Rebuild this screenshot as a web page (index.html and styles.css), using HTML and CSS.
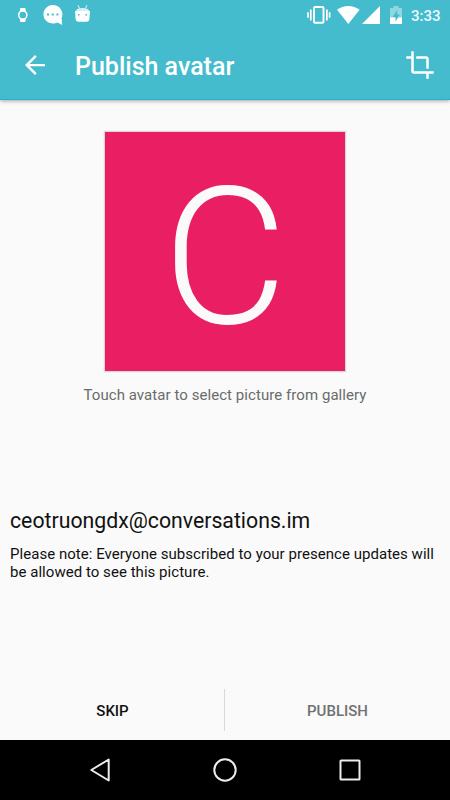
FILE: index.html
```html
<!DOCTYPE html>
<html lang="en">
  <head>
    <meta charset="UTF-8" />
    <meta name="viewport" content="width=device-width, initial-scale=1.0" />
    <title>Publish avatar</title>
    <link rel="stylesheet" href="styles.css" />
  </head>
  <body>
    <div class="screen">
      <header class="header">
        <div class="status_bar">
          <div class="notifications">
            <!-- watch -->
            <svg class="icon_watch" width="10" height="16" viewBox="0 0 10 16">
              <path d="M2.300 1h5l.6 4h-6.200zM2.300 15h5l.6-4h-6.200z" fill="#fff" />
              <circle cx="4.800" cy="8" r="4.100" fill="#45bccd" stroke="#fff" stroke-width="1.500" />
            </svg>
            <!-- chat -->
            <svg class="icon_chat" width="20" height="20" viewBox="0 0 20 20">
              <path d="M9.700 0a9.700 9.300 0 1 0 4.800 17.600L19.200 20 18.600 13A9.700 9.300 0 0 0 9.700 0z" fill="#fff" />
              <path d="M4 8.500h2v2H4zM8.700 8.500h2v2h-2zM13.400 8.500h2v2h-2z" fill="#45bccd" />
            </svg>
            <!-- android -->
            <svg class="icon_droid" width="15" height="17" viewBox="0 0 15 17">
              <path d="M3 .3L4.600 3.500M12 .3L10.400 3.500" stroke="#fff" stroke-width=".9" />
              <path d="M.8 6C1.200 4 3.500 3 7.500 3S13.800 4 14.200 6z" fill="#d3f0f4" />
              <path d="M0 6h15l-.6 8q-.3 2.800-3 2.800H3.600q-2.700 0-3-2.800z" fill="#fff" />
              <path d="M3 9h1.500v1.500H3zM10.500 9H12v1.500h-1.500z" fill="#45bccd" />
            </svg>
          </div>
          <div class="system_icons">
            <!-- vibrate -->
            <svg class="icon_vibrate" width="24" height="18" viewBox="0 0 24 18">
              <rect x="7" y="1" width="9.500" height="15.800" rx="1" fill="none" stroke="#fff" stroke-width="1.900" />
              <path d="M3.800 3.500v11M19.900 3.500v11M1 6.200v5.600M22.600 6.200v5.600" stroke="#fff" stroke-width="1.700" fill="none" />
            </svg>
            <!-- wifi -->
            <svg class="icon_wifi" width="23" height="18" viewBox="0 0 23 18">
              <path d="M0 3.800Q5 0 11.300 0t11.300 3.800L11.300 18z" fill="#fff" />
            </svg>
            <!-- signal -->
            <svg class="icon_signal" width="18" height="18" viewBox="0 0 18 18">
              <path d="M0 18L18 0v18z" fill="#fff" />
            </svg>
            <!-- battery -->
            <svg class="icon_battery" width="12" height="18" viewBox="0 0 12 18">
              <path d="M3.500 0h5v2H12v10H0V2h3.500z" fill="#8fd7e1" />
              <path d="M0 11.500h12V18H0z" fill="#fff" />
              <path d="M7.200 4L2.500 11h3v4.500L9.800 8.500H7z" fill="#45bccd" />
            </svg>
            <span class="clock">3:33</span>
          </div>
        </div>
        <div class="toolbar">
          <svg class="icon_back" width="30" height="30" viewBox="0 0 24 24" fill="#fff">
            <path d="M20 11.100H7.700l5.700-5.700L12 4l-8 8 8 8 1.400-1.400L7.700 12.900H20z" />
          </svg>
          <h1 class="title">Publish avatar</h1>
          <svg class="icon_crop" width="30" height="30" viewBox="0 0 24 24" fill="#fff">
            <path d="M17 15h2V7c0-1.100-.9-2-2-2H9v2h8v8zM7 17V1H5v4H1v2h4v10c0 1.100.9 2 2 2h10v4h2v-4h4v-2H7z" />
          </svg>
        </div>
      </header>

      <main class="content">
        <div class="avatar"><span class="avatar_letter">C</span></div>
        <p class="hint">Touch avatar to select picture from gallery</p>
        <div class="account">
          <p class="account_name">ceotruongdx@conversations.im</p>
          <p class="note">
            Please note: Everyone subscribed to your presence updates will<br />
            be allowed to see this picture.
          </p>
        </div>
      </main>

      <div class="btn_group">
        <button class="btn skip">SKIP</button>
        <button class="btn publish" disabled>PUBLISH</button>
      </div>

      <nav class="nav_bar">
        <svg width="24" height="26" viewBox="0 0 24 26">
          <path d="M20.700 2.500v21L3.300 13z" fill="none" stroke="#ececec" stroke-width="2" stroke-linejoin="round" />
        </svg>
        <svg width="26" height="26" viewBox="0 0 26 26">
          <circle cx="13" cy="13" r="10.700" fill="none" stroke="#ececec" stroke-width="2" />
        </svg>
        <svg width="24" height="26" viewBox="0 0 24 26">
          <rect x="2.500" y="3.500" width="19" height="19" rx=".6" fill="none" stroke="#ececec" stroke-width="2" />
        </svg>
      </nav>
    </div>
  </body>
</html>
```

FILE: styles.css
```css
body {
  margin: 0;
  font-family: Roboto, "Liberation Sans", sans-serif;
  color: #111;
}
p,
h1 {
  margin: 0;
}
svg {
  display: block;
  flex: none;
}
.screen {
  display: flex;
  flex-direction: column;
  width: 450px;
  height: 800px;
  background-color: #fafafa;
  overflow: hidden;
}

/* status bar + toolbar */
.header {
  height: 99px;
  background-color: #45bccd;
  border-bottom: 1px solid #1fb3c8;
  box-shadow: 0 1px 4px rgba(0, 0, 0, 0.35);
}
.status_bar {
  display: flex;
  justify-content: space-between;
  height: 30px;
  padding: 0 9px 0 18px;
}
.notifications,
.system_icons {
  display: flex;
  align-items: flex-start;
}
.icon_watch {
  margin-top: 7px;
}
.icon_chat {
  margin: 5px 0 0 15px;
}
.icon_droid {
  margin: 5px 0 0 12px;
}
.icon_vibrate {
  margin-top: 6px;
}
.icon_wifi {
  margin: 6px 0 0 6px;
}
.icon_signal {
  margin: 6px 0 0 2px;
}
.icon_battery {
  margin: 6px 0 0 10px;
}
.clock {
  width: 30px;
  margin-left: 9px;
  font-size: 15px;
  font-weight: 500;
  line-height: 32px;
  color: #ecf9fb;
}
.toolbar {
  display: flex;
  align-items: center;
  height: 70px;
  padding: 0 15px 0 20px;
}
.title {
  flex: 1;
  margin-left: 25px;
  padding-top: 3px;
  font-size: 25px;
  font-weight: 500;
  line-height: 30px;
  color: #fff;
}

.content {
  display: flex;
  flex: 1;
  flex-direction: column;
  align-items: center;
  padding: 31px 10px 0;
}
.avatar {
  display: flex;
  justify-content: center;
  width: 240px;
  height: 239px;
  border: 1px solid #dcd6d8;
  background-color: #e91e63;
  box-shadow: 0 0 1px rgba(0, 0, 0, 0.2);
}
.avatar_letter {
  font-size: 192px;
  font-weight: 300;
  line-height: 252px;
  color: #fafafa;
}
.hint {
  margin-top: 14px;
  font-size: 15px;
  line-height: 18px;
  letter-spacing: 0.06px;
  color: #6b6b6b;
}
.account {
  align-self: stretch;
  margin-top: 103px;
}
.account_name {
  font-size: 21.25px;
  line-height: 28px;
}
.note {
  margin-top: 10px;
  font-size: 15px;
  line-height: 18px;
  letter-spacing: 0.04px;
  white-space: nowrap;
}

/* bottom buttons */
.btn_group {
  display: flex;
  height: 60px;
}
.btn {
  flex: 1;
  padding: 2px 0 0;
  border: none;
  background-color: transparent;
  font-family: inherit;
  font-size: 15px;
  font-weight: 500;
  color: #111;
}
.publish {
  color: #717171;
}
.skip {
  background: linear-gradient(#d9d9d9, #d9d9d9) right 9px / 1px 42px no-repeat;
}
.nav_bar {
  display: flex;
  justify-content: space-between;
  align-items: center;
  height: 60px;
  padding: 0 88px;
  background-color: #000;
}
```
